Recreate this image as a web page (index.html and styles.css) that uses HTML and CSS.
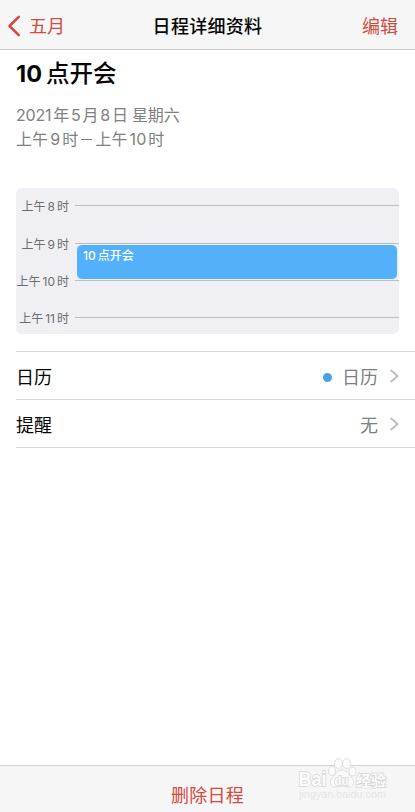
FILE: index.html
```html
<!DOCTYPE html>
<html lang="zh-CN">
<head>
<meta charset="utf-8">
<title>日程详细资料</title>
<link rel="stylesheet" href="styles.css">
</head>
<body>
<div class="screen">
  <header class="nav">
    <a class="back"><svg width="14" height="22" viewBox="0 0 14 22"><path d="M11.8 1.8 2.5 11 11.800 20.2"/></svg><span>五月</span></a>
    <h1>日程详细资料</h1>
    <a class="edit">编辑</a>
  </header>
  <main>
    <h2><span class="num">10</span>点开会</h2>
    <div class="date">
      <p class="day">2021<i></i>年<i></i>5<i></i>月<i></i>8<i></i>日 星期六</p>
      <p class="time">上午<i></i>9<i></i>时<b></b>上午<i></i>10<i></i>时</p>
    </div>
    <section class="timeline">
      <div class="hour"><span>上午<i></i>8<i></i>时</span></div>
      <div class="hour"><span>上午<i></i>9<i></i>时</span></div>
      <div class="hour"><span>上午<i></i>10<i></i>时</span></div>
      <div class="hour"><span>上午<i></i>11<i></i>时</span></div>
      <div class="event">10<i></i>点开会</div>
    </section>
    <section class="rows">
      <div class="row"><span class="label">日历</span><span class="dot"></span><span class="value">日历</span><svg width="9" height="16" viewBox="0 0 9 16"><path d="M1.2 2.500 7.600 8 1.200 13.500"/></svg></div>
      <div class="row"><span class="label">提醒</span><span class="value">无</span><svg width="9" height="16" viewBox="0 0 9 16"><path d="M1.2 2.500 7.600 8 1.200 13.500"/></svg></div>
    </section>
  </main>
  <footer class="bar"><a>删除日程</a></footer>
  <svg class="mark" width="98" height="48" viewBox="0 0 98 48">
    <g class="paw"><ellipse cx="41.5" cy="11.500" rx="4" ry="5"/><ellipse cx="49.500" cy="11.500" rx="4" ry="5"/><ellipse cx="35" cy="19" rx="3.500" ry="4.500"/><ellipse cx="55.500" cy="19.500" rx="3.500" ry="4.500"/><path d="M45 18c-5 0-6 4-9 7-5 5-2 10 2 10 3 0 5-1 7-1s4 1 7 1c4 0 7-5 2-10-3-3-4-7-9-7z"/></g>
    <g class="brand"><text x="1.500" y="34" textLength="28" lengthAdjust="spacingAndGlyphs">Bai</text><text class="du" x="37.500" y="32.500" textLength="14" lengthAdjust="spacingAndGlyphs">du</text><text class="cn" x="59" y="33.500">经验</text></g>
    <text class="url" x="2" y="45.500" textLength="87" lengthAdjust="spacingAndGlyphs">jingyan.baidu.com</text>
  </svg>
</div>
</body>
</html>
```
FILE: styles.css
```css
* { box-sizing: border-box; margin: 0; padding: 0; }
body { background: #fff; font-family: Inter, "Noto Sans CJK SC", sans-serif; color: #050505; }
svg path { fill: none; stroke-linecap: round; stroke-linejoin: round; }
i { display: inline-block; width: 2px; }
.screen { position: relative; width: 415px; height: 812px; display: flex; flex-direction: column; overflow: hidden; }
main { flex: 1; }
.nav { height: 50px; flex: none; display: grid; grid-template-columns: 1fr auto 1fr; align-items: center; padding: 4px 17px 0 7px; background: #f6f6f6; border-bottom: 1px solid #cdcdcd; font-size: 18px; line-height: 24px; }
.nav h1 { font-size: 18px; font-weight: 500; letter-spacing: .3px; margin-left: 10px; }
.nav a, .bar a { color: #d34b40; }
.back { display: flex; align-items: center; gap: 8px; letter-spacing: -.1px; }
.back svg { stroke: #d34b40; stroke-width: 2.5; margin-top: -2px; }
.edit { text-align: right; }
h2 { margin: 8px 16px 0; height: 32px; line-height: 32px; font-size: 23.5px; font-weight: 500; display: flex; gap: 4px; }
.num { font-weight: 700; font-size: 23.5px; }
.date { margin: 13px 16px 0; font-size: 16px; line-height: 24px; color: #808080; white-space: nowrap; }
.day { letter-spacing: -.22px; }
.time { letter-spacing: .1px; }
.date b { display: inline-block; width: 11px; height: 1px; background: #808080; margin: 0 3px; vertical-align: 5px; }
.timeline { position: relative; margin: 37px 16px 0; height: 146px; border-radius: 6px; background: #efeff4; overflow: hidden; }
.hour { height: 37.4px; display: flex; align-items: center; font-size: 12px; font-weight: 400; color: #6c6c71; white-space: nowrap; }
.hour span { width: 59px; flex: none; text-align: right; line-height: 18px; padding: 1px 6px 0 0; }
.hour::after { content: ""; flex: 1; height: 1px; background: #bdbdc2; margin-top: -2px; }
.event { position: absolute; left: 60px; top: 56px; width: 322px; height: 36px; border: 1px solid #efeff4; border-radius: 6px; background: #52b1fa; color: #fff; font-size: 12px; line-height: 14px; font-weight: 500; padding: 4px 6px; }
.rows { margin: 17px 0 0 16px; border-top: 1px solid #dadada; }
.row { height: 48px; display: flex; align-items: center; border-bottom: 1px solid #dadada; padding: 5px 16px 0 0; font-size: 18px; line-height: 24px; }
.label { flex: 1; }
.value { color: #808080; }
.dot { width: 9px; height: 9px; border-radius: 50%; background: #45a3e6; margin: -1px 10px 0 0; }
.row svg { stroke: #bfbfc2; stroke-width: 2; margin: -5px 0 0 12px; }
.bar { flex: none; height: 47px; padding-top: 12px; text-align: center; background: #f6f6f6; border-top: 1px solid #d2d2d2; font-size: 18px; line-height: 35px; letter-spacing: .2px; }
.mark { position: absolute; left: 297px; top: 752px; }
.mark text { font-family: "Liberation Sans", "Noto Sans CJK SC", sans-serif; fill: #fbfbfb; stroke: #d4d4d4; stroke-width: 1.4px; paint-order: stroke; font-weight: 700; font-size: 20px; }
.mark .du { font-size: 13px; }
.mark .cn { font-size: 15px; }
.mark .url { font-size: 10px; font-weight: 400; fill: #e6e6e6; stroke: none; }
.paw ellipse, .paw path { fill: #fafafa; stroke: #d8d8d8; stroke-width: .8px; }
```
